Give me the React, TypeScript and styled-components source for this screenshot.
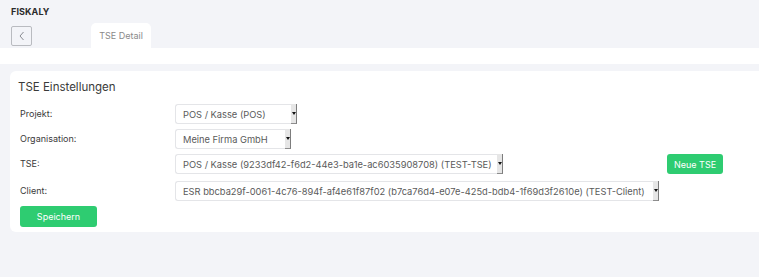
import React from 'react';
import styled, { createGlobalStyle } from 'styled-components';

const GlobalStyle = createGlobalStyle`
  html, body {
    margin: 0;
    padding: 0;
    background: #f3f4f8;
    font-family: Inter, "Noto Sans", "Liberation Sans", sans-serif;
    color: #333;
  }
  * { box-sizing: border-box; }
`;

const Page = styled.div`
  width: 759px;
  height: 277px;
  background: #f3f4f8;
  overflow: hidden;
`;

const Header = styled.header`
  height: 48px;
  padding: 0 11px;
  display: flex;
  flex-direction: column;
`;

const Brand = styled.div`
  height: 23px;
  padding-top: 6px;
  font-size: 9px;
  font-weight: 700;
  letter-spacing: 0.1px;
  color: #2b2b2b;
`;

const NavRow = styled.div`
  flex: 1;
  display: flex;
  align-items: flex-end;
`;

const BackButton = styled.button`
  width: 21px;
  height: 20px;
  margin-bottom: 2px;
  padding: 0;
  border: 1px solid #b9bbc0;
  border-radius: 2px;
  background: transparent;
  display: flex;
  align-items: center;
  justify-content: center;
  cursor: pointer;
`;

const Tab = styled.div`
  margin-left: 59px;
  width: 60px;
  height: 25px;
  background: #fff;
  border-radius: 5px 5px 0 0;
  font-size: 9px;
  color: #8a8a8a;
  display: flex;
  align-items: center;
  justify-content: center;
`;

const SubBar = styled.div`
  height: 16px;
  background: #fff;
  margin-bottom: 7px;
`;

const Card = styled.section`
  margin-left: 10px;
  height: 161px;
  background: #fff;
  border-radius: 6px 0 0 6px;
  padding: 9px 10px 0 10px;
`;

const Title = styled.h2`
  margin: 0 0 9px -2px;
  font-size: 11.5px;
  font-weight: 400;
  color: #3a3a3a;
  line-height: 15px;
`;

const Form = styled.div`
  display: grid;
  grid-template-columns: 155px 492px auto;
  row-gap: 5px;
  align-items: center;
`;

const Label = styled.label<{ $mt?: number }>`
  margin-top: ${(p) => p.$mt ?? 0}px;
  font-size: 9px;
  line-height: 12px;
  color: #3a3a3a;
`;

const Field = styled.div<{ $span?: boolean; $mt?: number }>`
  grid-column: ${(p) => (p.$span ? '2 / 4' : 'auto')};
  margin-top: ${(p) => p.$mt ?? 0}px;
  display: flex;
`;

const SelectBox = styled.div<{ $w: number }>`
  width: ${(p) => p.$w}px;
  height: 20px;
  border: 1px solid #e4e5e8;
  border-right: none;
  border-radius: 3px 0 0 3px;
  display: flex;
  align-items: center;
  padding-left: 7px;
  font-size: 9.3px;
  color: #5a5a5a;
  white-space: nowrap;
`;

const SelectText = styled.span`
  flex: 1;
  overflow: hidden;
`;

const Arrow = styled.span`
  width: 6px;
  height: 20px;
  margin-top: -1px;
  margin-bottom: -1px;
  background: #e6e6e6;
  border-right: 1px solid #7d7d7d;
  border-bottom: 1px solid #8d8d8d;
  display: flex;
  align-items: center;
  justify-content: center;
  &::after {
    content: "";
    border-left: 2px solid transparent;
    border-right: 2px solid transparent;
    border-top: 3px solid #111;
  }
`;

const GreenButton = styled.button<{ $w: number; $h: number }>`
  display: block;
  width: ${(p) => p.$w}px;
  height: ${(p) => p.$h}px;
  border: none;
  border-radius: 3px;
  background: #2ecc71;
  color: #fff;
  font-family: inherit;
  font-size: 9px;
  padding: 0;
  cursor: pointer;
`;

const Actions = styled.div`
  margin-top: 5px;
  display: flex;
`;

type SelectProps = { value: string; width: number };

const Select = ({ value, width }: SelectProps) => (
  <SelectBox $w={width}>
    <SelectText>{value}</SelectText>
    <Arrow />
  </SelectBox>
);

const App = () => {
  return (
    <Page>
      <GlobalStyle />
      <Header>
        <Brand>FISKALY</Brand>
        <NavRow>
          <BackButton aria-label="Zurück">
            <svg width="8" height="10" viewBox="0 0 8 10" fill="none">
              <path d="M5.5 1 L2 5 L5.5 9" stroke="#8a8c92" strokeWidth="1" />
            </svg>
          </BackButton>
          <Tab>TSE Detail</Tab>
        </NavRow>
      </Header>
      <SubBar />
      <Card>
        <Title>TSE Einstellungen</Title>
        <Form>
          <Label>Projekt:</Label>
          <Field $span>
            <Select value="POS / Kasse (POS)" width={122} />
          </Field>

          <Label>Organisation:</Label>
          <Field $span>
            <Select value="Meine Firma GmbH" width={116} />
          </Field>

          <Label>TSE:</Label>
          <Field>
            <Select value="POS / Kasse (9233df42-f6d2-44e3-ba1e-ac6035908708) (TEST-TSE)" width={328} />
          </Field>
          <Field>
            <GreenButton $w={56} $h={20}>Neue TSE</GreenButton>
          </Field>

          <Label $mt={2}>Client:</Label>
          <Field $span $mt={2}>
            <Select
              value="ESR bbcba29f-0061-4c76-894f-af4e61f87f02 (b7ca76d4-e07e-425d-bdb4-1f69d3f2610e) (TEST-Client)"
              width={484}
            />
          </Field>
        </Form>
        <Actions>
          <GreenButton $w={77} $h={21}>Speichern</GreenButton>
        </Actions>
      </Card>
    </Page>
  );
};

export default App;
